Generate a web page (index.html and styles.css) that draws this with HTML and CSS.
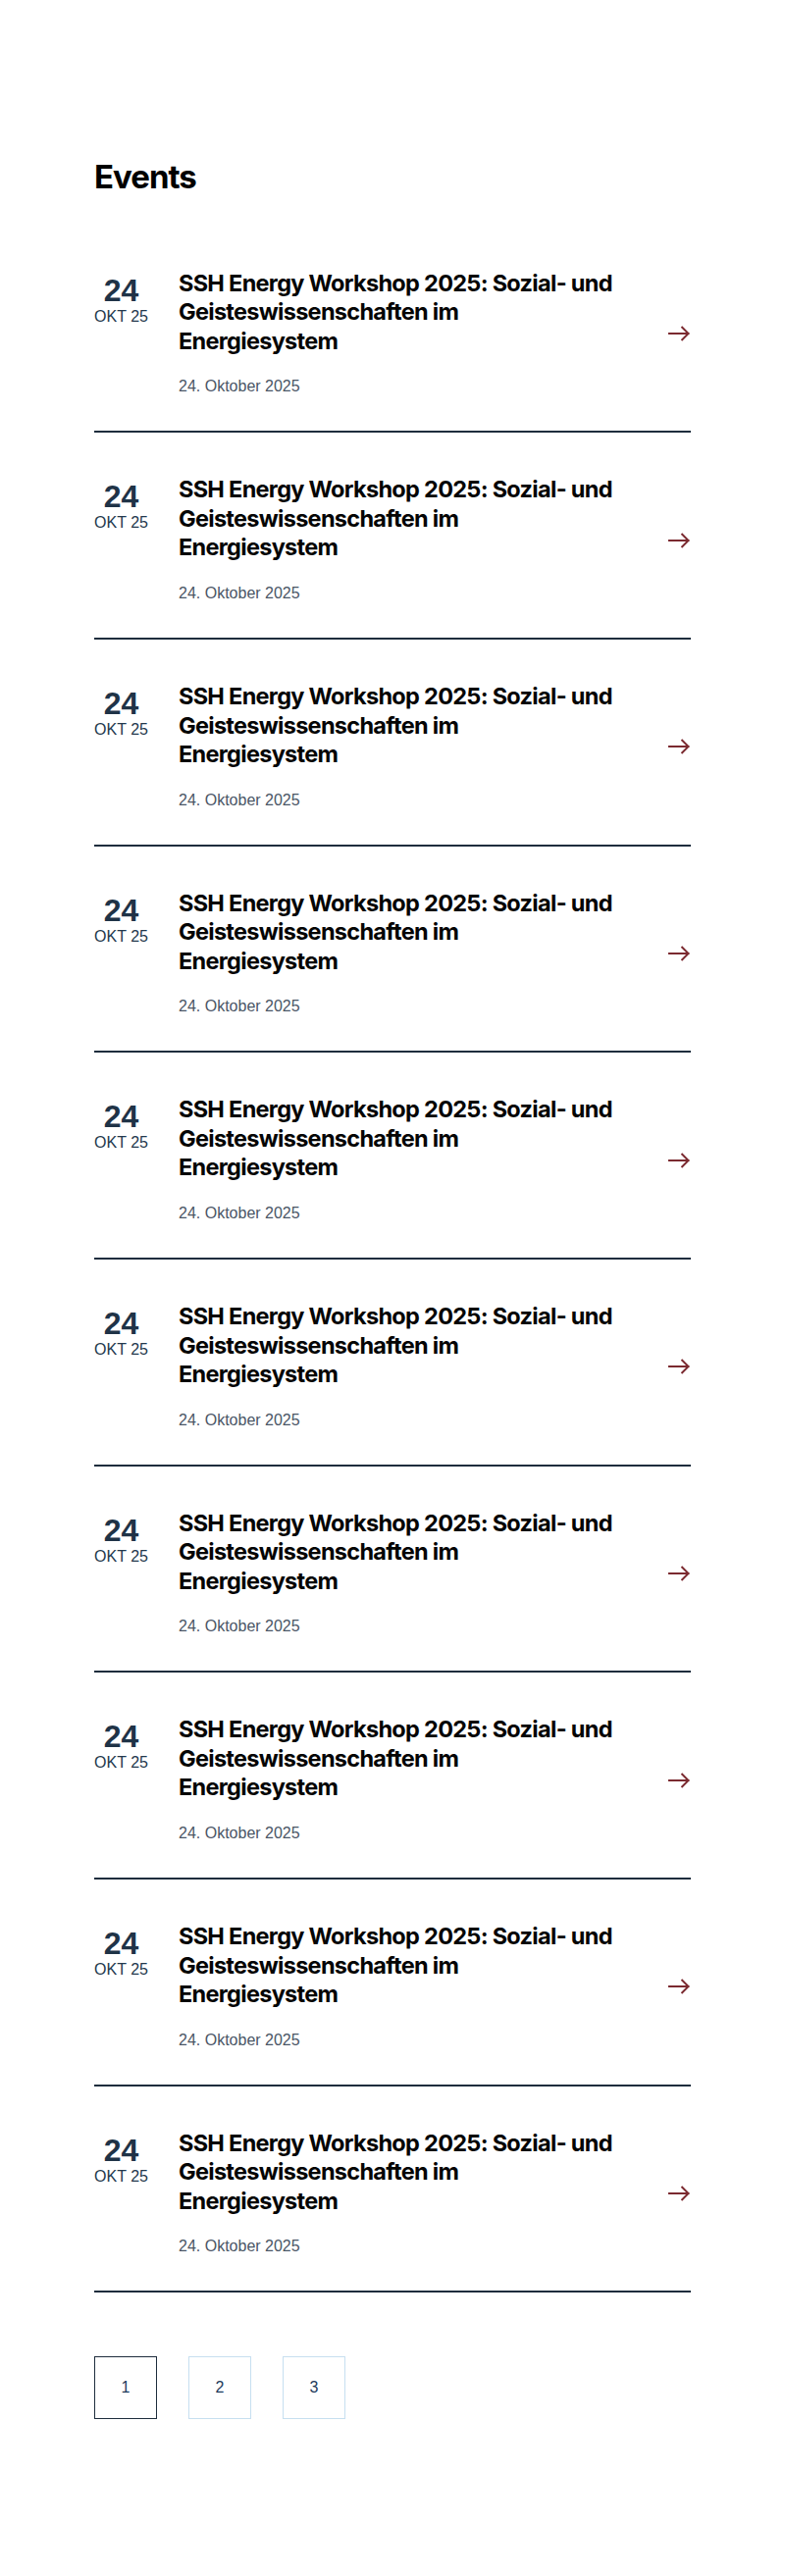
FILE: index.html
```html
<!DOCTYPE html>
<html lang="de">
<head>
<meta charset="utf-8">
<title>Events</title>
<link rel="stylesheet" href="styles.css">
</head>
<body>
<main class="page">
  <h1 class="page-title">Events</h1>
  <ul class="event-list">
    <li class="event">
      <div class="event-date"><span class="event-day">24</span><span class="event-month">OKT 25</span></div>
      <div class="event-body"><h2 class="event-title">SSH Energy Workshop 2025: Sozial- und Geisteswissenschaften im Energiesystem</h2><p class="event-meta">24. Oktober 2025</p></div>
      <svg class="event-arrow" width="24" height="24" viewBox="0 0 24 24" aria-hidden="true"><path d="M1 12H22.5M14.5 5L21.5 12L14.5 19" fill="none" stroke="#7b2a30" stroke-width="2"/></svg>
    </li>
    <li class="event">
      <div class="event-date"><span class="event-day">24</span><span class="event-month">OKT 25</span></div>
      <div class="event-body"><h2 class="event-title">SSH Energy Workshop 2025: Sozial- und Geisteswissenschaften im Energiesystem</h2><p class="event-meta">24. Oktober 2025</p></div>
      <svg class="event-arrow" width="24" height="24" viewBox="0 0 24 24" aria-hidden="true"><path d="M1 12H22.5M14.5 5L21.5 12L14.5 19" fill="none" stroke="#7b2a30" stroke-width="2"/></svg>
    </li>
    <li class="event">
      <div class="event-date"><span class="event-day">24</span><span class="event-month">OKT 25</span></div>
      <div class="event-body"><h2 class="event-title">SSH Energy Workshop 2025: Sozial- und Geisteswissenschaften im Energiesystem</h2><p class="event-meta">24. Oktober 2025</p></div>
      <svg class="event-arrow" width="24" height="24" viewBox="0 0 24 24" aria-hidden="true"><path d="M1 12H22.5M14.5 5L21.5 12L14.5 19" fill="none" stroke="#7b2a30" stroke-width="2"/></svg>
    </li>
    <li class="event">
      <div class="event-date"><span class="event-day">24</span><span class="event-month">OKT 25</span></div>
      <div class="event-body"><h2 class="event-title">SSH Energy Workshop 2025: Sozial- und Geisteswissenschaften im Energiesystem</h2><p class="event-meta">24. Oktober 2025</p></div>
      <svg class="event-arrow" width="24" height="24" viewBox="0 0 24 24" aria-hidden="true"><path d="M1 12H22.5M14.5 5L21.5 12L14.5 19" fill="none" stroke="#7b2a30" stroke-width="2"/></svg>
    </li>
    <li class="event">
      <div class="event-date"><span class="event-day">24</span><span class="event-month">OKT 25</span></div>
      <div class="event-body"><h2 class="event-title">SSH Energy Workshop 2025: Sozial- und Geisteswissenschaften im Energiesystem</h2><p class="event-meta">24. Oktober 2025</p></div>
      <svg class="event-arrow" width="24" height="24" viewBox="0 0 24 24" aria-hidden="true"><path d="M1 12H22.5M14.5 5L21.5 12L14.5 19" fill="none" stroke="#7b2a30" stroke-width="2"/></svg>
    </li>
    <li class="event">
      <div class="event-date"><span class="event-day">24</span><span class="event-month">OKT 25</span></div>
      <div class="event-body"><h2 class="event-title">SSH Energy Workshop 2025: Sozial- und Geisteswissenschaften im Energiesystem</h2><p class="event-meta">24. Oktober 2025</p></div>
      <svg class="event-arrow" width="24" height="24" viewBox="0 0 24 24" aria-hidden="true"><path d="M1 12H22.5M14.5 5L21.5 12L14.5 19" fill="none" stroke="#7b2a30" stroke-width="2"/></svg>
    </li>
    <li class="event">
      <div class="event-date"><span class="event-day">24</span><span class="event-month">OKT 25</span></div>
      <div class="event-body"><h2 class="event-title">SSH Energy Workshop 2025: Sozial- und Geisteswissenschaften im Energiesystem</h2><p class="event-meta">24. Oktober 2025</p></div>
      <svg class="event-arrow" width="24" height="24" viewBox="0 0 24 24" aria-hidden="true"><path d="M1 12H22.5M14.5 5L21.5 12L14.5 19" fill="none" stroke="#7b2a30" stroke-width="2"/></svg>
    </li>
    <li class="event">
      <div class="event-date"><span class="event-day">24</span><span class="event-month">OKT 25</span></div>
      <div class="event-body"><h2 class="event-title">SSH Energy Workshop 2025: Sozial- und Geisteswissenschaften im Energiesystem</h2><p class="event-meta">24. Oktober 2025</p></div>
      <svg class="event-arrow" width="24" height="24" viewBox="0 0 24 24" aria-hidden="true"><path d="M1 12H22.5M14.5 5L21.5 12L14.5 19" fill="none" stroke="#7b2a30" stroke-width="2"/></svg>
    </li>
    <li class="event">
      <div class="event-date"><span class="event-day">24</span><span class="event-month">OKT 25</span></div>
      <div class="event-body"><h2 class="event-title">SSH Energy Workshop 2025: Sozial- und Geisteswissenschaften im Energiesystem</h2><p class="event-meta">24. Oktober 2025</p></div>
      <svg class="event-arrow" width="24" height="24" viewBox="0 0 24 24" aria-hidden="true"><path d="M1 12H22.5M14.5 5L21.5 12L14.5 19" fill="none" stroke="#7b2a30" stroke-width="2"/></svg>
    </li>
    <li class="event">
      <div class="event-date"><span class="event-day">24</span><span class="event-month">OKT 25</span></div>
      <div class="event-body"><h2 class="event-title">SSH Energy Workshop 2025: Sozial- und Geisteswissenschaften im Energiesystem</h2><p class="event-meta">24. Oktober 2025</p></div>
      <svg class="event-arrow" width="24" height="24" viewBox="0 0 24 24" aria-hidden="true"><path d="M1 12H22.5M14.5 5L21.5 12L14.5 19" fill="none" stroke="#7b2a30" stroke-width="2"/></svg>
    </li>
  </ul>
  <nav class="pagination">
    <a class="page-link is-active" href="#">1</a>
    <a class="page-link" href="#">2</a>
    <a class="page-link" href="#">3</a>
  </nav>
</main>
</body>
</html>
```
FILE: styles.css
```css
html, body {
  margin: 0;
  padding: 0;
  background: #ffffff;
}

body {
  font-family: "Liberation Sans", Arial, sans-serif;
  color: #0b0b0b;
}

.page {
  padding: 161px 96px 160px;
}

.page-title {
  margin: 0 0 30px;
  font-family: Inter, "Noto Sans", sans-serif;
  font-weight: 700;
  font-size: 33px;
  line-height: 39.6px;
  letter-spacing: -0.03em;
  color: #000000;
}

.event-list {
  list-style: none;
  margin: 0;
  padding: 0;
}

.event {
  display: flex;
  align-items: center;
  padding: 43px 0 32.9px;
  border-bottom: 2px solid #1e2d3d;
}

.event-date {
  align-self: flex-start;
  display: flex;
  flex-direction: column;
  align-items: center;
  width: 55px;
  margin-top: 6px;
  margin-right: 31px;
  flex: none;
  color: #1f3347;
}

.event-day {
  font-weight: 700;
  font-size: 32px;
  line-height: 32px;
}

.event-month {
  font-size: 16px;
  line-height: 22px;
  color: #23384d;
  white-space: nowrap;
}

.event-body {
  flex: 1;
  min-width: 0;
  margin-right: 51px;
}

.event-title {
  margin: 0;
  font-family: Inter, "Noto Sans", sans-serif;
  font-weight: 700;
  font-size: 23.5px;
  line-height: 29.6px;
  letter-spacing: -0.03em;
  color: #050505;
}

.event-meta {
  margin: 20px 0 0;
  font-size: 16px;
  line-height: 24px;
  color: #4a5666;
}

.event-arrow {
  flex: none;
  display: block;
}

.pagination {
  display: flex;
  gap: 32px;
  margin-top: 65px;
}

.page-link {
  display: flex;
  align-items: center;
  justify-content: center;
  width: 64px;
  height: 64px;
  box-sizing: border-box;
  border: 1px solid #c7dff0;
  font-size: 16px;
  color: #1e3a5c;
  text-decoration: none;
}

.page-link.is-active {
  border-color: #1e2d3d;
}
```
